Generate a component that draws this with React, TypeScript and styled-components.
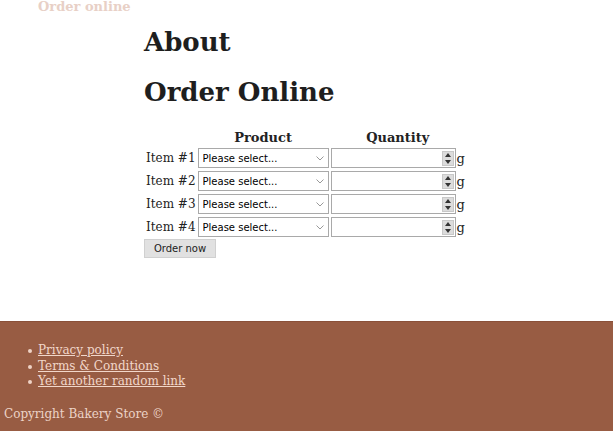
import React from "react";
import styled, { createGlobalStyle } from "styled-components";

const Global = createGlobalStyle`
  html, body { margin: 0; padding: 0; background: #fff; }
  body { font-family: "DejaVu Serif", Georgia, serif; color: #222; }
`;

const Page = styled.div`
  width: 613px;
  height: 431px;
  display: flex;
  flex-direction: column;
  overflow: hidden;
`;

const TopNav = styled.nav`
  height: 0;
  position: relative;
`;

const NavLink = styled.a`
  position: absolute;
  top: -1px;
  left: 38px;
  font-size: 13px;
  font-weight: bold;
  color: #e8d0c6;
  text-decoration: none;
`;

const Main = styled.main`
  flex: 1;
  padding-left: 144px;
  padding-top: 26px;
`;

const H1 = styled.h1`
  margin: 0 0 18px 0;
  font-size: 26px;
  line-height: 32px;
  font-weight: bold;
  color: #1e1e1e;
`;

const Table = styled.table`
  border-collapse: separate;
  border-spacing: 2px 3px;
  margin: 0 0 -1px 0;
  font-size: 12px;
`;

const Th = styled.th`
  font-size: 13px;
  font-weight: bold;
  padding: 0;
  text-align: center;
  height: 16px;
`;

const Label = styled.td`
  padding: 0;
  font-size: 12px;
  white-space: nowrap;
`;

const Cell = styled.td`
  padding: 0;
`;

const SelectWrap = styled.div`
  position: relative;
  width: 131px;
  height: 20px;
`;

const Select = styled.select`
  appearance: none;
  display: block;
  width: 131px;
  height: 20px;
  border: 1px solid #a9a9a9;
  background: #fff;
  font-family: "DejaVu Sans", Tahoma, sans-serif;
  font-size: 10px;
  padding: 0 0 0 4px;
  color: #000;
  box-sizing: border-box;
`;

const Chevron = styled.svg`
  position: absolute;
  right: 5px;
  top: 8px;
  pointer-events: none;
`;

const QtyWrap = styled.div`
  position: relative;
  display: flex;
  align-items: center;
  gap: 1px;
`;

const Input = styled.input`
  width: 125px;
  height: 20px;
  box-sizing: border-box;
  border: 1px solid #a9a9a9;
  padding: 0 4px;
  font-size: 11px;
  &::-webkit-inner-spin-button, &::-webkit-outer-spin-button { -webkit-appearance: none; margin: 0; }
`;

const Spinner = styled.div`
  position: absolute;
  left: 111px;
  top: 3px;
  width: 10px;
  height: 13px;
  background: #dcdcdc;
  border: 1px solid #c8c8c8;
  display: flex;
  flex-direction: column;
  align-items: center;
  justify-content: space-around;
  pointer-events: none;
`;

const Unit = styled.span`
  font-size: 13px;
`;

const Button = styled.button`
  display: block;
  height: 19px;
  width: 72px;
  padding: 0;
  border: 1px solid #d0d0d0;
  background: #e1e1e1;
  font-family: "DejaVu Sans", Tahoma, sans-serif;
  font-size: 10px;
  color: #222;
`;

const Footer = styled.footer`
  height: 110px;
  background: #985c43;
  border-top: 1px solid #8a5039;
  box-sizing: border-box;
  padding-top: 21px;
`;

const Links = styled.ul`
  margin: 0 0 17px 0;
  padding-left: 38px;
  list-style: none;
`;

const Li = styled.li`
  font-size: 12px;
  line-height: 15.5px;
  position: relative;
  &::before {
    content: "";
    position: absolute;
    left: -10px;
    top: 6px;
    width: 4px;
    height: 4px;
    border-radius: 50%;
    background: #efd3c6;
  }
`;

const FLink = styled.a`
  color: #f2d7ca;
  text-decoration: underline;
`;

const Copy = styled.p`
  margin: 0;
  padding-left: 4px;
  font-size: 12px;
  color: #ecd3c7;
`;

const Arrow = ({ up }: { up?: boolean }) => (
  <svg width="6" height="4" viewBox="0 0 6 4">
    <path d={up ? "M0 4 L3 0 L6 4 Z" : "M0 0 L3 4 L6 0 Z"} fill="#333" />
  </svg>
);

export default function App() {
  const items = [1, 2, 3, 4];
  return (
    <Page>
      <Global />
      <TopNav>
        <NavLink href="#">Order online</NavLink>
      </TopNav>
      <Main>
        <H1>About</H1>
        <H1>Order Online</H1>
        <Table>
          <thead>
            <tr>
              <Th></Th>
              <Th>Product</Th>
              <Th>Quantity</Th>
            </tr>
          </thead>
          <tbody>
            {items.map((i) => (
              <tr key={i}>
                <Label>Item #{i}</Label>
                <Cell>
                  <SelectWrap>
                    <Select defaultValue="">
                      <option value="">Please select...</option>
                    </Select>
                    <Chevron width="8" height="5" viewBox="0 0 8 5">
                      <path d="M0.5 0.5 L4 4 L7.5 0.5" fill="none" stroke="#999" strokeWidth="1" />
                    </Chevron>
                  </SelectWrap>
                </Cell>
                <Cell>
                  <QtyWrap>
                    <Input type="number" />
                    <Spinner>
                      <Arrow up />
                      <Arrow />
                    </Spinner>
                    <Unit>g</Unit>
                  </QtyWrap>
                </Cell>
              </tr>
            ))}
          </tbody>
        </Table>
        <Button>Order now</Button>
      </Main>
      <Footer>
        <Links>
          <Li><FLink href="#">Privacy policy</FLink></Li>
          <Li><FLink href="#">Terms &amp; Conditions</FLink></Li>
          <Li><FLink href="#">Yet another random link</FLink></Li>
        </Links>
        <Copy>Copyright Bakery Store ©</Copy>
      </Footer>
    </Page>
  );
}
